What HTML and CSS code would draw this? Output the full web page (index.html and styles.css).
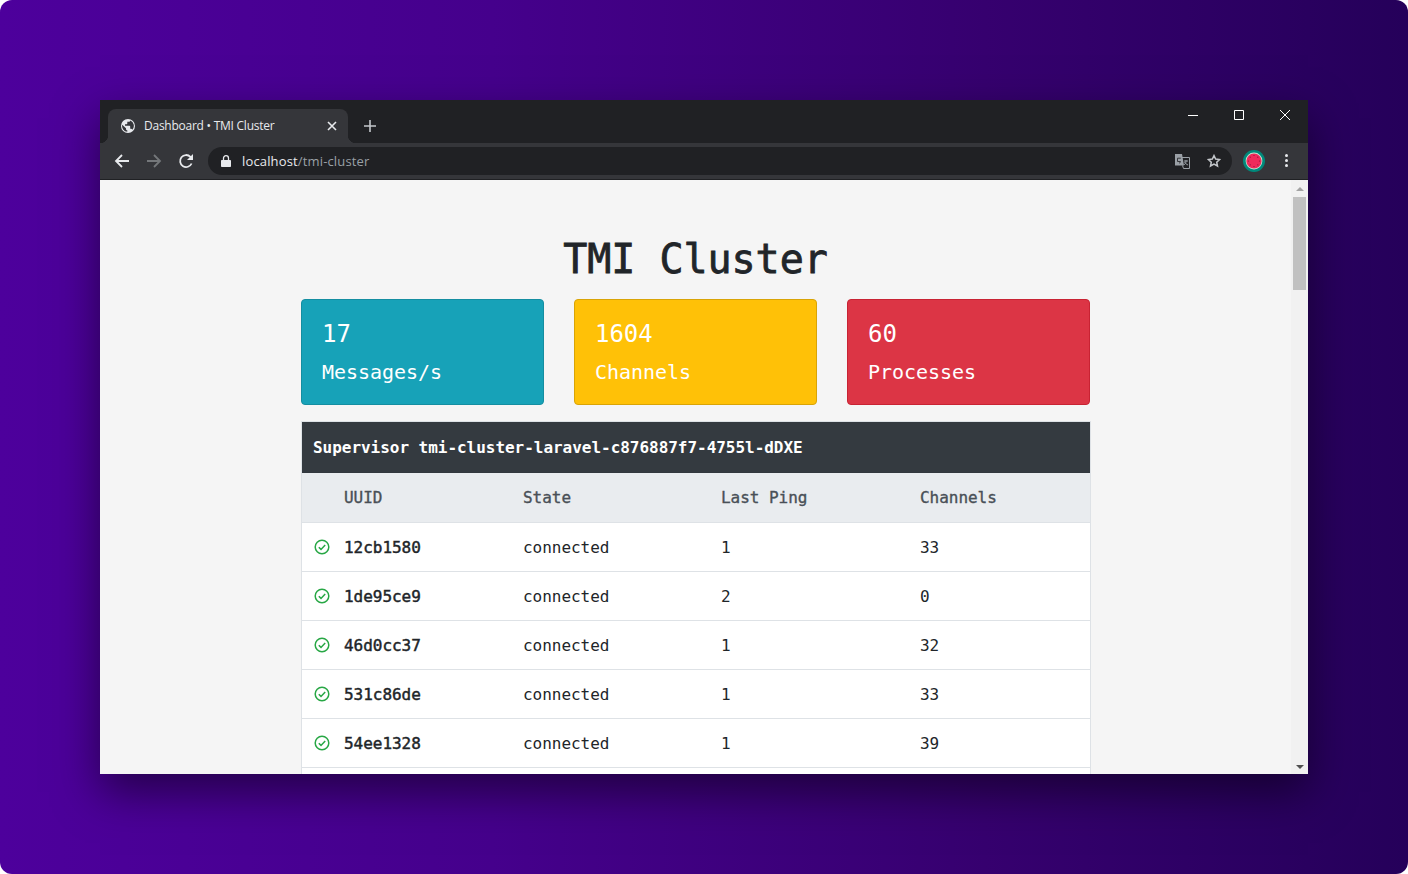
FILE: index.html
```html
<!DOCTYPE html>
<html lang="en">
<head>
    <meta charset="UTF-8">
    <meta name="viewport" content="width=device-width, initial-scale=1.0">
    <title>Dashboard - TMI Cluster</title>
    <link rel="stylesheet" href="styles.css">
</head>
<body>
    <div class="desktop">
        <div class="window">
            <div class="titlebar">
                <div class="tab">
                    <svg class="tab-icon" width="16" height="16" viewBox="0 0 16 16"><path fill="#e8eaed" fill-rule="evenodd" d="M8 1a7 7 0 1 0 0 14A7 7 0 0 0 8 1zM2.200 6.800L6 10.200v.8c0 .8.600 1.300 1.300 1.300v1.500a5.800 5.800 0 0 1-5.100-7zM12.300 11.800c-.2-.600-.7-1-1.300-1h-.8V8.500c0-.4-.3-.7-.7-.7H5V6.200h1.600c.4 0 .7-.3.7-.7V3.800h1.500c.8 0 1.400-.6 1.400-1.300a5.800 5.800 0 0 1 2.100 9.300z"/></svg>
                    <span class="tab-title">Dashboard • TMI Cluster</span>
                    <svg class="tab-close" width="10" height="10" viewBox="0 0 10 10"><path stroke="#e8eaed" stroke-width="1.600" d="M1 1l8 8M9 1l-8 8"/></svg>
                </div>
                <svg class="new-tab" width="12" height="12" viewBox="0 0 12 12"><path stroke="#c4c7cb" stroke-width="1.600" d="M6 0v12M0 6h12"/></svg>
                <div class="window-controls">
                    <span class="control"><svg width="10" height="10" viewBox="0 0 10 10"><path stroke="#fff" d="M0 5.500h10"/></svg></span>
                    <span class="control"><svg width="10" height="10" viewBox="0 0 10 10"><path fill="none" stroke="#fff" d="M.5.500h9v9h-9z"/></svg></span>
                    <span class="control"><svg width="10" height="10" viewBox="0 0 10 10"><path stroke="#fff" d="M0 0l10 10M10 0L0 10"/></svg></span>
                </div>
            </div>
            <div class="toolbar">
                <span class="tool"><svg width="16" height="16" viewBox="0 0 16 16"><path fill="none" stroke="#e8eaed" stroke-width="1.800" d="M15 8H2M8 2L2 8l6 6"/></svg></span>
                <span class="tool"><svg width="16" height="16" viewBox="0 0 16 16"><path fill="none" stroke="#74777a" stroke-width="1.800" d="M1 8h13M8 2l6 6-6 6"/></svg></span>
                <span class="tool"><svg width="16" height="16" viewBox="0 0 16 16"><path fill="none" stroke="#e8eaed" stroke-width="1.800" d="M13.600 10.500A6 6 0 1 1 12.400 3.800L14 5.400"/><path fill="#e8eaed" d="M15 1v6H9z"/></svg></span>
                <div class="omnibox">
                    <svg class="lock" width="10" height="12" viewBox="0 0 10 12"><path fill="#e8eaed" d="M1 5h8c.5 0 1 .4 1 1v5c0 .6-.5 1-1 1H1c-.5 0-1-.4-1-1V6c0-.6.5-1 1-1z"/><path fill="none" stroke="#e8eaed" stroke-width="1.300" d="M2.500 5V3.200a2.500 2.500 0 0 1 5 0V5"/></svg>
                    <span class="url"><span class="url-host">localhost</span>/tmi-cluster</span>
                    <svg class="translate" width="16" height="16" viewBox="0 0 16 16"><path fill="none" stroke="#9aa0a6" d="M7.500 4.500h8v11h-6l-1-3"/><path fill="#9aa0a6" d="M1 1h7l2 11.500H1z"/><path fill="none" stroke="#35363a" d="M6.800 5.200H3.500v3.300h3c0 1.200-.8 1.500-1.500 1.500"/><path fill="none" stroke="#9aa0a6" d="M10 8h4M12 7v1c0 2-1 3-2 4M10.500 9c.5 1 2 2.500 3.500 3"/></svg>
                    <svg class="star" width="14" height="14" viewBox="0 0 16 16"><path fill="none" stroke="#c4c7cb" stroke-width="1.700" d="M8 1.800l1.900 4 4.400.500-3.200 3 .9 4.400L8 11.500l-4 2.200.9-4.400-3.200-3 4.400-.500z"/></svg>
                </div>
                <svg class="avatar" width="22" height="22" viewBox="0 0 22 22"><circle cx="11" cy="11" r="11" fill="#00897b"/><circle cx="11" cy="11" r="8.400" fill="#bfe8d4"/><circle cx="11" cy="11" r="7.600" fill="#ee2a5b"/><g fill="#8a1238"><circle cx="11" cy="5.500" r=".6"/><circle cx="16.500" cy="11" r=".6"/><circle cx="11" cy="16.500" r=".6"/><circle cx="5.500" cy="11" r=".6"/><circle cx="7.200" cy="7.200" r=".6"/><circle cx="14.800" cy="7.200" r=".6"/><circle cx="7.200" cy="14.800" r=".6"/><circle cx="14.800" cy="14.800" r=".6"/></g></svg>
                <span class="menu"><i></i><i></i><i></i></span>
            </div>
            <div class="viewport">
                <div class="page">
                    <div class="container">
                        <h1>TMI Cluster</h1>
                        <div class="stats">
                            <div class="stat stat-info">
                                <h3>17</h3>
                                <p>Messages/s</p>
                            </div>
                            <div class="stat stat-warning">
                                <h3>1604</h3>
                                <p>Channels</p>
                            </div>
                            <div class="stat stat-danger">
                                <h3>60</h3>
                                <p>Processes</p>
                            </div>
                        </div>
                        <div class="supervisor">
                            <div class="supervisor-name">Supervisor tmi-cluster-laravel-c876887f7-4755l-dDXE</div>
                            <table>
                                <thead>
                                    <tr>
                                        <th class="col-icon"></th>
                                        <th class="col-uuid">UUID</th>
                                        <th class="col-state">State</th>
                                        <th class="col-ping">Last Ping</th>
                                        <th class="col-channels">Channels</th>
                                    </tr>
                                </thead>
                                <tbody>
                                    <tr>
                                        <td><svg class="check" viewBox="0 0 16 16"><circle cx="8" cy="8" r="6.800"/><path d="M4.800 8.200l2.200 2.200 4.200-4.500"/></svg></td>
                                        <td class="uuid">12cb1580</td><td>connected</td><td>1</td><td>33</td>
                                    </tr>
                                    <tr>
                                        <td><svg class="check" viewBox="0 0 16 16"><circle cx="8" cy="8" r="6.800"/><path d="M4.800 8.200l2.200 2.200 4.200-4.500"/></svg></td>
                                        <td class="uuid">1de95ce9</td><td>connected</td><td>2</td><td>0</td>
                                    </tr>
                                    <tr>
                                        <td><svg class="check" viewBox="0 0 16 16"><circle cx="8" cy="8" r="6.800"/><path d="M4.800 8.200l2.200 2.200 4.200-4.500"/></svg></td>
                                        <td class="uuid">46d0cc37</td><td>connected</td><td>1</td><td>32</td>
                                    </tr>
                                    <tr>
                                        <td><svg class="check" viewBox="0 0 16 16"><circle cx="8" cy="8" r="6.800"/><path d="M4.800 8.200l2.200 2.200 4.200-4.500"/></svg></td>
                                        <td class="uuid">531c86de</td><td>connected</td><td>1</td><td>33</td>
                                    </tr>
                                    <tr>
                                        <td><svg class="check" viewBox="0 0 16 16"><circle cx="8" cy="8" r="6.800"/><path d="M4.800 8.200l2.200 2.200 4.200-4.500"/></svg></td>
                                        <td class="uuid">54ee1328</td><td>connected</td><td>1</td><td>39</td>
                                    </tr>
                                    <tr>
                                        <td></td><td></td><td></td><td></td><td></td>
                                    </tr>
                                </tbody>
                            </table>
                        </div>
                    </div>
                </div>
                <div class="scrollbar">
                    <span class="arrow-up"></span>
                    <span class="thumb"></span>
                    <span class="arrow-down"></span>
                </div>
            </div>
        </div>
    </div>
</body>
</html>
```

FILE: styles.css
```css
html, body {
    margin: 0;
    padding: 0;
    height: 100%;
    background-color: #fff;
    overflow: hidden;
}
.desktop {
    box-sizing: border-box;
    height: 874px;
    padding: 100px;
    border-radius: 12px;
    background: linear-gradient(90deg, #4d009c 0%, #45008c 35%, #36006f 70%, #25005a 100%);
}
.window {
    display: flex;
    flex-direction: column;
    height: 674px;
    overflow: hidden;
    box-shadow: 0 18px 42px rgba(0, 0, 0, 0.5);
}

/* browser chrome */
.titlebar {
    display: flex;
    align-items: flex-start;
    flex: none;
    height: 43px;
    background-color: #202124;
}
.tab {
    position: relative;
    display: flex;
    align-items: center;
    box-sizing: border-box;
    width: 240px;
    height: 34px;
    margin: 9px 0 0 8px;
    padding: 0 11px 0 12px;
    border-radius: 8px 8px 0 0;
    background-color: #35363a;
    color: #e8eaed;
    font-family: "Open Sans", sans-serif;
    font-size: 12px;
}
.tab::before, .tab::after {
    content: "";
    position: absolute;
    bottom: 0;
    width: 8px;
    height: 8px;
}
.tab::before {
    left: -8px;
    background: radial-gradient(circle at 0 0, transparent 8px, #35363a 8.500px);
}
.tab::after {
    right: -8px;
    background: radial-gradient(circle at 100% 0, transparent 8px, #35363a 8.500px);
}
.tab-icon {
    flex: none;
}
.tab-title {
    flex: 1;
    margin: 0 0 2px 8px;
    letter-spacing: -0.25px;
    white-space: nowrap;
}
.new-tab {
    margin: 20px 0 0 16px;
}
.window-controls {
    display: flex;
    margin-left: auto;
}
.control {
    display: flex;
    align-items: center;
    justify-content: center;
    width: 46px;
    height: 30px;
}
.toolbar {
    display: flex;
    align-items: center;
    flex: none;
    box-sizing: border-box;
    height: 37px;
    padding: 0 20px 1px 6px;
    border-bottom: 1px solid #202124;
    background-color: #35363a;
}
.tool {
    display: flex;
    align-items: center;
    justify-content: center;
    width: 32px;
    height: 32px;
}
.omnibox {
    display: flex;
    align-items: center;
    flex: 1;
    height: 28px;
    margin-left: 6px;
    padding: 0 11px 0 13px;
    border-radius: 14px;
    background-color: #202124;
}
.url {
    flex: 1;
    margin-left: 11px;
    color: #9aa0a6;
    font-family: "Open Sans", sans-serif;
    font-size: 13px;
    letter-spacing: 0.15px;
}
.url-host {
    color: #e8eaed;
}
.star {
    margin-left: 17px;
}
.avatar {
    margin-left: 11px;
}
.menu {
    display: flex;
    flex-direction: column;
    gap: 2px;
    margin-left: 20px;
}
.menu i {
    width: 3px;
    height: 3px;
    border-radius: 50%;
    background-color: #e8eaed;
}

/* page */
.viewport {
    display: flex;
    flex: 1;
    min-height: 0;
}
.page {
    flex: 1;
    overflow: hidden;
    background-color: #f5f5f5;
    color: #212529;
    font-family: "DejaVu Sans Mono", monospace;
    font-size: 16px;
    letter-spacing: -0.002em;
}
.container {
    width: 789px;
    margin: 0 auto;
}
h1 {
    margin: 0 0 16px;
    padding-top: 55px;
    font-size: 40px;
    font-weight: 400;
    line-height: 48px;
    text-align: center;
    -webkit-text-stroke: 0.8px #212529;
}
.stats {
    display: flex;
    gap: 30px;
    margin-bottom: 16px;
}
.stat {
    flex: 1;
    box-sizing: border-box;
    height: 106px;
    padding: 20px;
    border: 1px solid;
    border-radius: 4px;
    color: #fff;
}
.stat h3 {
    margin: 0 0 8px;
    font-size: 24px;
    font-weight: 400;
    line-height: 29px;
}
.stat p {
    margin: 0;
    font-size: 20px;
    line-height: 30px;
}
.stat-info {
    background-color: #17a2b8;
    border-color: #148ea1;
}
.stat-warning {
    background-color: #ffc107;
    border-color: #d9a406;
}
.stat-danger {
    background-color: #dc3545;
    border-color: #c82333;
}
.supervisor {
    margin-right: -1px;
    border: 1px solid #dee2e6;
    background-color: #fff;
}
.supervisor-name {
    height: 50px;
    padding: 1px 11px 0;
    box-sizing: border-box;
    background-color: #343a40;
    color: #fff;
    font-weight: 700;
    line-height: 50px;
    white-space: nowrap;
}
table {
    width: 100%;
    border-collapse: collapse;
    table-layout: fixed;
}
th, td {
    height: 24px;
    padding: 13px 12px 11px;
    border-top: 1px solid #dee2e6;
    line-height: 24px;
    text-align: left;
}
th {
    padding-bottom: 12px;
    background-color: #e9ecef;
    border-top-color: #32383e;
    color: #495057;
    font-weight: 400;
    -webkit-text-stroke: 0.35px #495057;
}
thead tr {
    border-bottom: 1px solid #dee2e6;
}
.col-icon {
    width: 6px;
}
.col-uuid {
    width: 155px;
}
.col-state {
    width: 174px;
}
.col-ping {
    width: 175px;
}
.uuid {
    font-weight: 400;
    -webkit-text-stroke: 0.45px #212529;
}
.check {
    display: block;
    width: 16px;
    height: 16px;
    margin-bottom: 2px;
    fill: none;
    stroke: #28a745;
    stroke-width: 1.500;
}

/* scrollbar */
.scrollbar {
    position: relative;
    flex: none;
    width: 17px;
    background-color: #f1f1f1;
}
.thumb {
    position: absolute;
    top: 17px;
    left: 2px;
    width: 13px;
    height: 93px;
    background-color: #c1c1c1;
}
.arrow-up, .arrow-down {
    position: absolute;
    left: 5px;
    width: 0;
    height: 0;
    border-left: 4px solid transparent;
    border-right: 4px solid transparent;
}
.arrow-up {
    top: 7px;
    border-bottom: 4px solid #a3a3a3;
}
.arrow-down {
    bottom: 5px;
    border-top: 4px solid #505050;
}
```
